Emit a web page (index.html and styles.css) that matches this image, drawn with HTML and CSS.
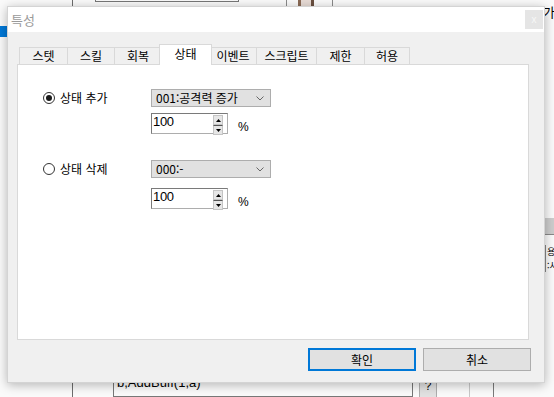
FILE: index.html
```html
<!DOCTYPE html>
<html lang="ko">
<head>
<meta charset="utf-8">
<link rel="stylesheet" href="styles.css">
</head>
<body>
<div class="desktop">
  <div class="bg-vline bg-l1"></div>
  <div class="bg-vline bg-l2"></div>
  <div class="bg-topbox"></div>
  <div class="bg-vline bg-l3"></div>
  <div class="bg-vline bg-l4"></div>
  <div class="bg-pic"></div>
  <div class="bg-blue"></div>
  <div class="bg-ga">가</div>
  <div class="bg-graybar"></div>
  <div class="bg-side"><span class="side-line">용</span><span class="side-line">:사</span></div>
  <div class="bg-script">b,AddBuff(1,a)</div>
  <div class="bg-q">?</div>
  <div class="bg-vline bg-l5"></div>
  <div class="bg-vline bg-l6"></div>
</div>

<div class="dialog">
  <div class="titlebar">
    <span class="title">특성</span>
    <span class="close">x</span>
  </div>
  <div class="body">
    <div class="tabs">
      <div class="tab w48">스텟</div>
      <div class="tab w47">스킬</div>
      <div class="tab w47">회복</div>
      <div class="tab active w51">상태</div>
      <div class="tab w46">이벤트</div>
      <div class="tab w60">스크립트</div>
      <div class="tab w48">제한</div>
      <div class="tab w46">허용</div>
    </div>
    <div class="panel">
      <div class="group g1">
        <div class="row">
          <label class="radio-label"><span class="radio checked"></span>상태 추가</label>
          <div class="combo"><span>001:공격력 증가</span><svg class="chev" width="8" height="5" viewBox="0 0 8 5"><polyline points="0.5,0.5 4,4 7.5,0.5" fill="none" stroke="#666" stroke-width="1"/></svg></div>
        </div>
        <div class="spinrow s1">
          <div class="spin"><span class="val">100</span>
            <div class="arrows">
              <div class="arr"><svg width="5" height="3" viewBox="0 0 5 3"><polygon points="2.5,0 5,3 0,3" fill="#000"/></svg></div>
              <div class="arr"><svg width="5" height="3" viewBox="0 0 5 3"><polygon points="0,0 5,0 2.5,3" fill="#000"/></svg></div>
            </div>
          </div>
          <span class="pct">%</span>
        </div>
      </div>
      <div class="group g2">
        <div class="row">
          <label class="radio-label"><span class="radio"></span>상태 삭제</label>
          <div class="combo"><span>000:-</span><svg class="chev" width="8" height="5" viewBox="0 0 8 5"><polyline points="0.5,0.5 4,4 7.5,0.5" fill="none" stroke="#666" stroke-width="1"/></svg></div>
        </div>
        <div class="spinrow s2">
          <div class="spin"><span class="val">100</span>
            <div class="arrows">
              <div class="arr"><svg width="5" height="3" viewBox="0 0 5 3"><polygon points="2.5,0 5,3 0,3" fill="#000"/></svg></div>
              <div class="arr"><svg width="5" height="3" viewBox="0 0 5 3"><polygon points="0,0 5,0 2.5,3" fill="#000"/></svg></div>
            </div>
          </div>
          <span class="pct">%</span>
        </div>
      </div>
    </div>
    <div class="buttons">
      <button class="btn default">확인</button>
      <button class="btn">취소</button>
    </div>
  </div>
</div>
</body>
</html>
```
FILE: styles.css
```css
html, body {
  margin: 0;
  padding: 0;
}
body {
  width: 554px;
  height: 397px;
  overflow: hidden;
  position: relative;
  background: #ffffff;
  font-family: "Noto Sans CJK KR", "Noto Sans", sans-serif;
  font-size: 12px;
  color: #000;
}
.desktop {
  position: absolute;
  inset: 0;
  background: #fafafa;
}
.bg-vline {
  position: absolute;
  width: 1px;
  background: #6d6d6d;
}
.bg-l1 { left: 72px; top: 0; height: 8px; }
.bg-l2 { left: 72px; top: 380px; height: 17px; }
.bg-l3 { left: 286px; top: 0; height: 8px; background: #8a8a8a; }
.bg-l4 { left: 332px; top: 0; height: 8px; background: #8a8a8a; }
.bg-l5 { left: 469px; top: 380px; height: 17px; background: #c8c8c8; }
.bg-l6 { left: 493px; top: 380px; height: 17px; background: #7a7a7a; }
.bg-topbox {
  position: absolute;
  left: 95px;
  top: -10px;
  width: 142px;
  height: 10px;
  border: 1px solid #777;
}
.bg-pic {
  position: absolute;
  left: 298px;
  top: 0;
  width: 16px;
  height: 7px;
  background: linear-gradient(90deg, #8a6a55 0 3px, #e8dcd6 3px 13px, #6a5040 13px);
}
.bg-blue {
  position: absolute;
  left: 0;
  top: 26px;
  width: 8px;
  height: 11px;
  background: #0078d7;
}
.bg-ga {
  position: absolute;
  left: 543px;
  top: 3px;
  font-size: 13px;
  line-height: 18px;
}
.bg-graybar {
  position: absolute;
  left: 544px;
  top: 218px;
  width: 10px;
  height: 16px;
  background: #cdcdcd;
  border-bottom: 1px solid #888;
}
.bg-side {
  position: absolute;
  left: 545px;
  top: 245px;
  display: flex;
  flex-direction: column;
  gap: 1px;
  border-left: 1px solid #888;
  padding-left: 1px;
}
.side-line {
  font-size: 9px;
  line-height: 13px;
  height: 13px;
  white-space: nowrap;
}
.bg-script {
  position: absolute;
  left: 113px;
  top: 372px;
  width: 300px;
  height: 25px;
  border: 1px solid #777;
  box-sizing: border-box;
  font-family: "Liberation Sans", sans-serif;
  font-size: 13px;
  line-height: 20px;
  padding-left: 3px;
}
.bg-q {
  position: absolute;
  left: 419px;
  top: 376px;
  width: 18px;
  height: 22px;
  background: #e1e1e1;
  border: 1px solid #adadad;
  box-sizing: border-box;
  text-align: center;
  font-family: "Liberation Sans", sans-serif;
  font-size: 12px;
  line-height: 18px;
}

.dialog {
  position: absolute;
  left: 7px;
  top: 6px;
  width: 538px;
  height: 377px;
  background: #f0f0f0;
  box-shadow: 0 2px 10px rgba(0, 0, 0, 0.28);
  border: 1px solid #d4d4d4;
  box-sizing: border-box;
}
.titlebar {
  height: 25px;
  background: #ffffff;
  display: flex;
  align-items: center;
  justify-content: space-between;
  padding-left: 3px;
  padding-right: 1px;
}
.title {
  color: #9a9a9a;
  font-size: 13px;
  line-height: 16px;
  margin-top: 1px;
}
.close {
  width: 18px;
  height: 19px;
  margin-top: 3px;
  background: #e5e5e5;
  color: #f7f7f7;
  font-family: "Liberation Sans", sans-serif;
  font-size: 10px;
  line-height: 19px;
  text-align: center;
  align-self: flex-start;
}
.body {
  padding: 12px 0 0 9px;
}
.tabs {
  display: flex;
  align-items: flex-end;
  height: 20px;
  margin-left: 2px;
  position: relative;
  z-index: 1;
}
.tab {
  height: 17px;
  box-sizing: border-box;
  border: 1px solid #d9d9d9;
  border-bottom: none;
  border-right: none;
  background: #f0f0f0;
  text-align: center;
  line-height: 16px;
  font-size: 12px;
}
.tab:last-child { border-right: 1px solid #d9d9d9; }
.tab.active {
  height: 21px;
  margin-bottom: -1px;
  background: #ffffff;
  border-right: 1px solid #d9d9d9;
  line-height: 17px;
  margin-left: -2px;
  margin-right: -2px;
  position: relative;
}
.tab.active + .tab { border-left: none; }
.w48 { width: 48px; }
.w47 { width: 47px; }
.w51 { width: 53px; }
.w46 { width: 46px; }
.w60 { width: 60px; }
.panel {
  width: 512px;
  height: 276px;
  box-sizing: border-box;
  background: #ffffff;
  border: 1px solid #d9d9d9;
  padding-left: 25px;
}
.group { display: flex; flex-direction: column; }
.g1 { padding-top: 24px; }
.g2 { padding-top: 26px; }
.row {
  display: flex;
  align-items: center;
  height: 18px;
}
.radio-label {
  width: 108px;
  display: flex;
  align-items: center;
  font-size: 12px;
  line-height: 16px;
}
.radio {
  width: 12px;
  height: 12px;
  box-sizing: border-box;
  border: 1px solid #333;
  border-radius: 50%;
  margin-right: 5px;
  display: flex;
  align-items: center;
  justify-content: center;
  background: #fff;
}
.radio.checked::after {
  content: "";
  width: 6px;
  height: 6px;
  border-radius: 50%;
  background: #1a1a1a;
}
.combo {
  width: 120px;
  height: 18px;
  box-sizing: border-box;
  background: #e1e1e1;
  border: 1px solid #adadad;
  display: flex;
  align-items: center;
  justify-content: space-between;
  padding: 0 6px 0 4px;
  font-size: 12px;
  line-height: 16px;
}
.chev { display: block; }
.spinrow {
  display: flex;
  align-items: center;
  margin-left: 108px;
}
.s1 { margin-top: 6px; }
.s2 { margin-top: 10px; }
.spin {
  width: 77px;
  height: 21px;
  box-sizing: border-box;
  border: 1px solid #7a7a7a;
  border-color: #7a7a7a #adadad #adadad #7a7a7a;
  background: #fff;
  display: flex;
  justify-content: space-between;
  align-items: flex-start;
  padding: 0 4px 0 1px;
}
.val {
  font-family: "Liberation Sans", sans-serif;
  font-size: 13px;
  line-height: 15px;
  letter-spacing: -0.3px;
}
.arrows {
  margin-top: 1px;
  width: 10px;
  display: flex;
  flex-direction: column;
}
.arr {
  height: 8px;
  background: #e6e6e6;
  border: 1px solid #c4c4c4;
  display: flex;
  align-items: center;
  justify-content: center;
}
.arr + .arr { border-top: 1px solid #555; }
.arr svg { display: block; }
.pct {
  margin-left: 10px;
  margin-top: 6px;
  font-family: "Liberation Sans", sans-serif;
  font-size: 12px;
}
.buttons {
  display: flex;
  justify-content: flex-end;
  gap: 7px;
  margin-top: 8px;
  width: 514px;
}
.btn {
  width: 108px;
  height: 23px;
  box-sizing: border-box;
  background: #e1e1e1;
  border: 1px solid #adadad;
  font-family: "Noto Sans CJK KR", sans-serif;
  font-size: 12px;
  line-height: 16px;
  padding: 0;
  color: #000;
}
.btn.default {
  border: 2px solid #0078d7;
}
```
